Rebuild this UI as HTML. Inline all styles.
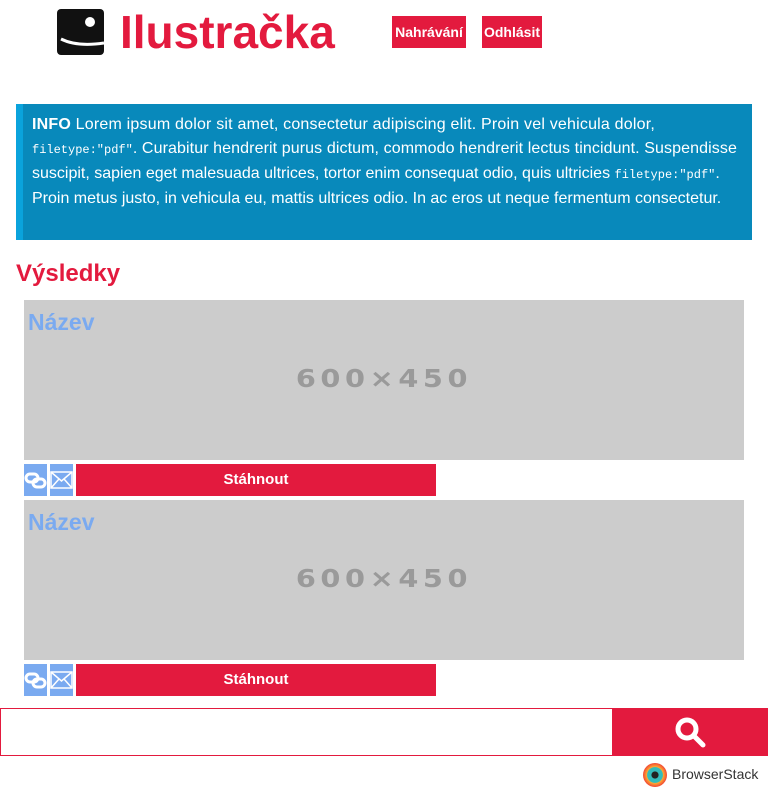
<!DOCTYPE html>
<html><head><meta charset="utf-8"><style>
body{margin:0;width:768px;height:795px;background:#fff;font-family:"Liberation Sans",sans-serif;position:relative;overflow:hidden}
.a{position:absolute}
.red{background:#e31a3e}
.btn{color:#fff;font-weight:bold;font-size:15px;text-align:center;line-height:32px}
.info{left:16px;top:104px;width:736px;height:136px;background:#0889bb;border-left:7px solid #0aa3dc;box-sizing:border-box;color:#fff;font-size:16px;line-height:24px;padding:9px 0 0 9px;white-space:nowrap;overflow:hidden}
code{font-family:"Liberation Mono",monospace;font-size:12px}
.card{left:24px;width:720px;height:160px;background:#cccccc}
.nz{color:#7aaaf0;font-weight:bold;font-size:23px;position:absolute;left:4px;top:9px}
.ph{position:absolute;left:0;right:0;top:64px;text-align:center;color:#9a9a9a;font-weight:bold;font-size:25px;letter-spacing:4px;font-family:"DejaVu Sans",sans-serif;transform:scaleX(1.15)}
.ic{width:23px;height:32px;background:#7aaaf0}
</style></head><body>
<div class="a" style="left:57px;top:9px;width:47px;height:46px;background:#111;border-radius:4px"></div>
<div class="a" style="left:85px;top:17px;width:10px;height:10px;border-radius:50%;background:#fff"></div>
<svg class="a" style="left:57px;top:9px" width="47" height="46"><path d="M4 30 Q20 38 47 34" stroke="#fff" stroke-width="3" fill="none"/></svg>
<div class="a" style="left:120px;top:4px;color:#e31a3e;font-weight:bold;font-size:46px;line-height:56px">Ilustračka</div>
<div class="a red btn" style="left:392px;top:16px;width:74px;font-size:14px">Nahrávání</div>
<div class="a red btn" style="left:482px;top:16px;width:60px;font-size:14px">Odhlásit</div>
<div class="a info"><span style="letter-spacing:0.2px"><b>INFO</b> Lorem ipsum dolor sit amet, consectetur adipiscing elit. Proin vel vehicula dolor,</span><br><code>filetype:"pdf"</code><span style="letter-spacing:0.1px">. Curabitur hendrerit purus dictum, commodo hendrerit lectus tincidunt. Suspendisse</span><br>suscipit, sapien eget malesuada ultrices, tortor enim consequat odio, quis ultricies <code>filetype:"pdf"</code>.<br>Proin metus justo, in vehicula eu, mattis ultrices odio. In ac eros ut neque fermentum consectetur.</div>
<div class="a" style="left:16px;top:258px;color:#e31a3e;font-weight:bold;font-size:24px;line-height:32px">Výsledky</div>
<div class="a card" style="top:300px"><div class="nz">Název</div><div class="ph">600×450</div></div>
<div class="a ic" style="left:24px;top:464px"></div><div class="a ic" style="left:50px;top:464px"></div>
<svg class="a" style="left:24px;top:464px" width="49" height="32"><g stroke="#fff" stroke-width="3" fill="none"><rect x="2" y="10" width="12" height="8" rx="4"/><rect x="9" y="15" width="12" height="8" rx="4"/></g><g stroke="#fff" stroke-width="1.5" fill="none"><rect x="27" y="8" width="21" height="16"/><path d="M27 8 L37.5 17 L48 8 M27 24 L35 15 M48 24 L40 15"/></g></svg>
<div class="a red btn" style="left:76px;top:464px;width:360px">Stáhnout</div>
<div class="a card" style="top:500px"><div class="nz">Název</div><div class="ph">600×450</div></div>
<div class="a ic" style="left:24px;top:664px"></div><div class="a ic" style="left:50px;top:664px"></div>
<svg class="a" style="left:24px;top:664px" width="49" height="32"><g stroke="#fff" stroke-width="3" fill="none"><rect x="2" y="10" width="12" height="8" rx="4"/><rect x="9" y="15" width="12" height="8" rx="4"/></g><g stroke="#fff" stroke-width="1.5" fill="none"><rect x="27" y="8" width="21" height="16"/><path d="M27 8 L37.5 17 L48 8 M27 24 L35 15 M48 24 L40 15"/></g></svg>
<div class="a red btn" style="left:76px;top:664px;width:360px">Stáhnout</div>
<div class="a" style="left:0;top:708px;width:613px;height:48px;border:1px solid #e31a3e;box-sizing:border-box"></div>
<div class="a red" style="left:613px;top:708px;width:155px;height:48px"></div>
<svg class="a" style="left:674px;top:716px" width="34" height="32"><circle cx="13" cy="13" r="9" stroke="#fff" stroke-width="5" fill="none"/><path d="M20 20 L29 29" stroke="#fff" stroke-width="5" stroke-linecap="round"/></svg>
<div class="a" style="left:643px;top:763px;width:24px;height:24px;border-radius:50%;background:radial-gradient(circle,#222 20%,#3bb 22%,#3bb 45%,#fa3 48%,#e33 75%)"></div>
<div class="a" style="left:672px;top:766px;font-size:14px;color:#333">BrowserStack</div>
</body></html>
